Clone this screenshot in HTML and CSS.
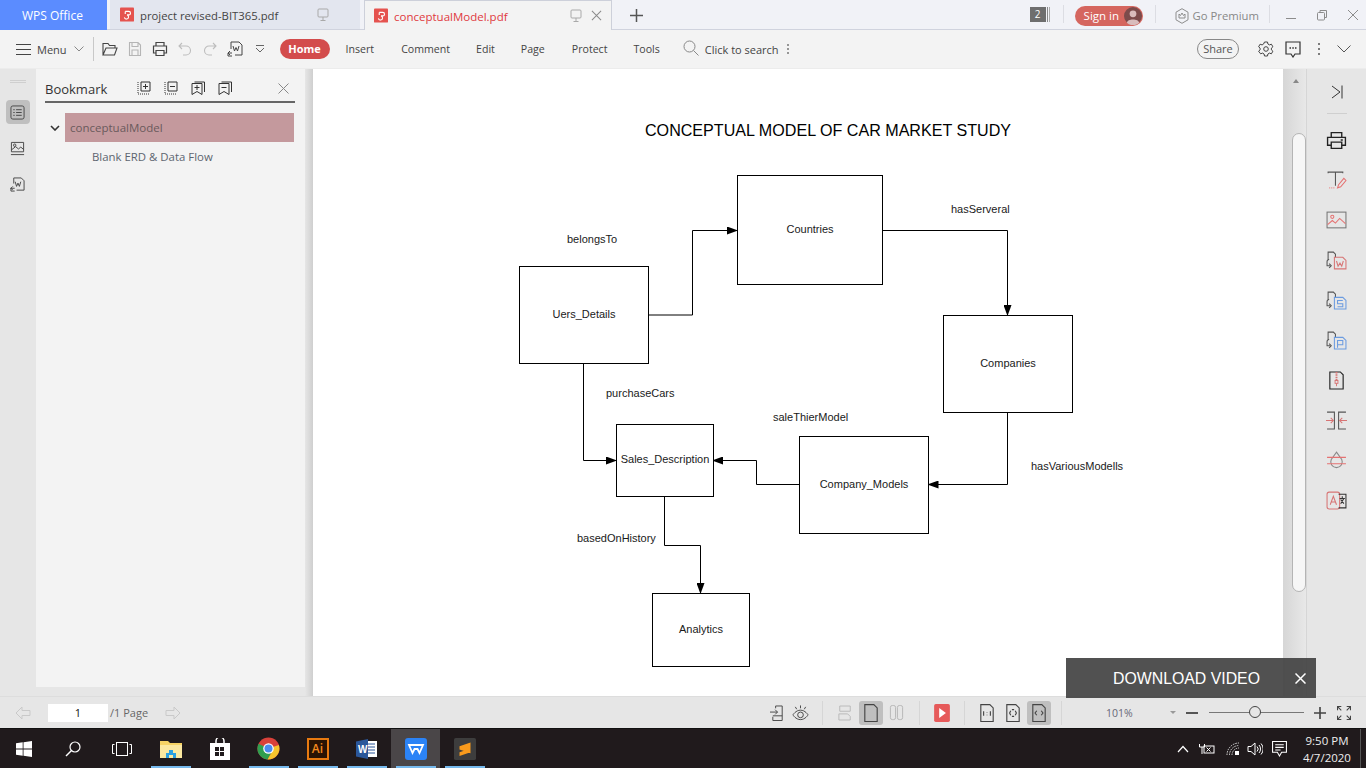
FILE: index.html
```html
<!DOCTYPE html>
<html lang="en">
<head>
<meta charset="utf-8">
<title>conceptualModel.pdf - WPS Office</title>
<link rel="stylesheet" href="styles.css">
</head>
<body>
<div class="app">
  <header class="tabbar">
    <div class="tab-home">WPS Office</div>
    <div class="tab tab-inactive">
      <svg class="pdf-badge" viewBox="0 0 16 16"><rect width="16" height="16" rx="1" fill="#e5534f"/><path d="M6 4.5h4a2 2 0 0 1 0 4H8M6 4.5v3M8 8.5a2.4 2.4 0 1 1-3 2.8" fill="none" stroke="#fff" stroke-width="1.3"/></svg>
      <span class="tab-title">project revised-BIT365.pdf</span>
      <svg class="tab-mon" viewBox="0 0 12 14"><rect x="1" y="1" width="10" height="8" rx="1" fill="none" stroke="#a9a9a9"/><path d="M6 9v3M3.5 12.5h5" stroke="#a9a9a9"/></svg>
    </div>
    <div class="tab tab-active">
      <svg class="pdf-badge" viewBox="0 0 16 16"><rect width="16" height="16" rx="1" fill="#e5534f"/><path d="M6 4.5h4a2 2 0 0 1 0 4H8M6 4.5v3M8 8.5a2.4 2.4 0 1 1-3 2.8" fill="none" stroke="#fff" stroke-width="1.3"/></svg>
      <span class="tab-title active-title">conceptualModel.pdf</span>
      <svg class="tab-mon" viewBox="0 0 12 14"><rect x="1" y="1" width="10" height="8" rx="1" fill="none" stroke="#a9a9a9"/><path d="M6 9v3M3.5 12.5h5" stroke="#a9a9a9"/></svg>
      <svg class="tab-x" viewBox="0 0 12 12"><path d="M1 1l10 10M11 1L1 11" stroke="#8a8a8a" stroke-width="1.1"/></svg>
    </div>
    <svg class="tab-plus" viewBox="0 0 13 13"><path d="M6.5 0v13M0 6.5h13" stroke="#555" stroke-width="1.5"/></svg>
    <div class="tab-spacer"></div>
    <div class="count"><span class="count-num">2</span><i class="count-bars"></i></div>
    <i class="tab-sep sep-a"></i>
    <div class="signin"><span class="signin-text">Sign in</span><svg class="avatar" viewBox="0 0 16 16"><circle cx="8" cy="8" r="8" fill="#7c4b4b"/><circle cx="8" cy="6" r="3" fill="#d9bcbc"/><path d="M2.5 14c.5-4 10.5-4 11 0a8 8 0 0 1-11 0z" fill="#d9bcbc"/></svg></div>
    <i class="tab-sep sep-b"></i>
    <svg class="crown" viewBox="0 0 14 16"><path d="M7 .7l6 3.5v7.600l-6 3.500-6-3.500V4.200z" fill="none" stroke="#8c8c8c"/><path d="M4 6l1.500 1.500L7 5l1.500 2.500L10 6v4H4z" fill="none" stroke="#8c8c8c"/></svg>
    <span class="premium">Go Premium</span>
    <i class="tab-sep sep-c"></i>
    <div class="win-btns">
      <svg viewBox="0 0 12 12"><path d="M1 9.5h10" stroke="#8c8c8c"/></svg>
      <svg viewBox="0 0 12 12"><rect x="1.5" y="3.5" width="7" height="7.500" rx="1" fill="none" stroke="#8c8c8c"/><path d="M4 3V1.500h6.500V8.500H8.500" fill="none" stroke="#8c8c8c"/></svg>
      <svg viewBox="0 0 12 12"><path d="M1 1l10 10M11 1L1 11" stroke="#8c8c8c"/></svg>
    </div>
  </header>

  <nav class="toolbar">
    <svg class="tb-burger" viewBox="0 0 15 11"><path d="M0 .5h15M0 5.500h15M0 10.500h15" stroke="#444"/></svg>
    <span class="tb-menu">Menu</span>
    <svg class="tb-chev" viewBox="0 0 10 6"><path d="M.5.500L5 5 9.500.500" fill="none" stroke="#888"/></svg>
    <i class="tb-sep"></i>
    <div class="quick">
      <svg viewBox="0 0 16 16"><path d="M1 14V2.500h5l1.500 2H13V7M1 14l3-7h11l-2.500 7z" fill="none" stroke="#444" stroke-width="1.100"/></svg>
      <svg viewBox="0 0 16 16"><path d="M2.500 1.500h8.500l2.500 2.500v10.500h-11zM5 1.500v4h6v-4M5 14.500V9h6v5.500" fill="none" stroke="#b5b5b5" stroke-width="1.100"/></svg>
      <svg viewBox="0 0 16 16"><path d="M4 5V1.500h8V5M4 12H1.500V5h13v7H12M4 9.500h8v5H4z" fill="none" stroke="#444" stroke-width="1.200"/></svg>
      <svg viewBox="0 0 16 16"><path d="M5 2L2 5l3 3M2.500 5H9a4 4 0 0 1 0 9H6" fill="none" stroke="#bdbdbd" stroke-width="1.100"/></svg>
      <svg viewBox="0 0 16 16"><path d="M11 2l3 3-3 3M13.500 5H7a4 4 0 0 0 0 9h3" fill="none" stroke="#bdbdbd" stroke-width="1.100"/></svg>
      <svg viewBox="0 0 16 16"><path d="M4 8V1h8l3 3v10H8M6 5l1.500 5L9 6.500l1.500 3.500L12 5M1 12h4M3 10l-2 2 2 2M1 12v3h4" fill="none" stroke="#444"/></svg>
      <svg class="q-more" viewBox="0 0 10 10"><path d="M1 1.500h8M1 4l4 4 4-4" fill="none" stroke="#666"/></svg>
    </div>
    <div class="menu-home">Home</div>
    <ul class="menu-list">
      <li>Insert</li><li>Comment</li><li>Edit</li><li>Page</li><li>Protect</li><li>Tools</li>
    </ul>
    <svg class="tb-search" viewBox="0 0 16 16"><circle cx="6.500" cy="6.500" r="5.500" fill="none" stroke="#888"/><path d="M10.500 10.500l5 5" stroke="#888"/></svg>
    <span class="tb-search-text">Click to search</span>
    <span class="vdots"><i></i><i></i><i></i></span>
    <div class="tb-spacer"></div>
    <div class="share">Share</div>
    <svg class="tb-r tb-gear" viewBox="0 0 16 16"><path d="M6.500 1h3l.4 2 1.500.9 2-.7 1.500 2.600-1.500 1.300v1.800l1.500 1.300-1.500 2.600-2-.7-1.500.9-.4 2h-3l-.4-2-1.500-.9-2 .7L.6 10.200l1.500-1.300V7.100L.6 5.800l1.500-2.600 2 .7 1.500-.9z" fill="none" stroke="#444"/><circle cx="8" cy="8" r="2.300" fill="none" stroke="#444"/></svg>
    <svg class="tb-r tb-chat" viewBox="0 0 16 17"><path d="M1 1h14v12h-5l-2 3-2-3H1z" fill="none" stroke="#333" stroke-width="1.200"/><path d="M4.500 7h1.500M7.300 7h1.500M10 7h1.500" stroke="#333" stroke-width="1.300"/></svg>
    <span class="vdots vdots-dark"><i></i><i></i><i></i></span>
    <svg class="tb-collapse" viewBox="0 0 14 8"><path d="M.5.500L7 7 13.500.500" fill="none" stroke="#555"/></svg>
  </nav>

  <main class="workspace">
    <aside class="rail">
      <i class="rail-grip"></i>
      <div class="rail-btn rail-on"><svg viewBox="0 0 16 16"><rect x="1" y="1" width="14" height="14" rx="2" fill="none" stroke="#444"/><path d="M3.500 5h1.500M6.500 5h6M3.500 8h1.500M6.500 8h6M3.500 11h1.500M6.500 11h6" stroke="#444"/></svg></div>
      <div class="rail-btn"><svg viewBox="0 0 16 16"><path d="M1.500 1.500h13v10h-13z" fill="none" stroke="#444"/><circle cx="5" cy="4.500" r="1.300" fill="none" stroke="#444"/><path d="M1.500 9.500L6 6l3 2.500 2.500-2 3 2.500M1 14.500h14" fill="none" stroke="#444"/></svg></div>
      <div class="rail-btn"><svg viewBox="0 0 16 16"><path d="M4 7V1h8l3 3v10H7M5.500 5l1.500 5 1.500-3.500L10 10l1.500-5M.5 12H5M3 10l-2 2 2 2M1 12v3h4" fill="none" stroke="#444"/></svg></div>
    </aside>
    <section class="bookmarks">
      <div class="bm-head">
        <span class="bm-title">Bookmark</span>
        <div class="bm-tools">
          <svg viewBox="0 0 14 14"><path d="M4 1h9v9H4z" fill="none" stroke="#333"/><path d="M8.500 3v5M6 5.500h5" stroke="#333"/><path d="M1 1v12h12" fill="none" stroke="#333" stroke-dasharray="1 1"/></svg>
          <svg viewBox="0 0 14 14"><path d="M4 1h9v9H4z" fill="none" stroke="#333"/><path d="M6 5.500h5" stroke="#333"/><path d="M1 1v12h12" fill="none" stroke="#333" stroke-dasharray="1 1"/></svg>
          <svg viewBox="0 0 14 14"><path d="M1 2.500h10v11L6 10.500l-5 3z" fill="none" stroke="#333"/><path d="M3.500 1h10v10" fill="none" stroke="#333"/><path d="M6 4v5M3.500 6.500h5" stroke="#333"/></svg>
          <svg viewBox="0 0 14 14"><path d="M1 2.500h10v11L6 10.500l-5 3z" fill="none" stroke="#333"/><path d="M3.500 1h10v10" fill="none" stroke="#333"/><path d="M3.500 6.500h5" stroke="#333"/></svg>
        </div>
        <svg class="bm-close" viewBox="0 0 11 11"><path d="M.5.500l10 10M10.500.500l-10 10" stroke="#888"/></svg>
      </div>
      <div class="bm-row">
        <svg class="bm-caret" viewBox="0 0 10 6"><path d="M1 1l4 4 4-4" fill="none" stroke="#333" stroke-width="1.600"/></svg>
        <div class="bm-selected">conceptualModel</div>
      </div>
      <div class="bm-child">Blank ERD &amp; Data Flow</div>
    </section>
    <i class="gutter"></i>

    <section class="viewer">
      <div class="page">
        <h1 class="doc-title">CONCEPTUAL MODEL OF CAR MARKET STUDY</h1>
        <svg class="wires" viewBox="0 0 970 628" aria-hidden="true">
          <defs><marker id="ah" markerWidth="11" markerHeight="8" refX="10" refY="4" orient="auto" markerUnits="userSpaceOnUse"><path d="M0 0L11 4 0 8z" fill="#000"/></marker></defs>
          <g fill="none" stroke="#000" stroke-width="1">
            <path d="M335.5 247H379.5V162.5H424" marker-end="url(#ah)"/>
            <path d="M569.5 162.5H694.5V247" marker-end="url(#ah)"/>
            <path d="M694.5 345V416.5H615.5" marker-end="url(#ah)"/>
            <path d="M486 416.5H443.5V392.5H400" marker-end="url(#ah)"/>
            <path d="M270.5 296V392.5H303" marker-end="url(#ah)"/>
            <path d="M351.5 429V477.5H387.5V525" marker-end="url(#ah)"/>
          </g>
        </svg>
        <div class="node n-users">Uers_Details</div>
        <div class="node n-countries">Countries</div>
        <div class="node n-companies">Companies</div>
        <div class="node n-models">Company_Models</div>
        <div class="node n-sales">Sales_Description</div>
        <div class="node n-analytics">Analytics</div>
        <span class="edge e-belongs">belongsTo</span>
        <span class="edge e-has">hasServeral</span>
        <span class="edge e-purchase">purchaseCars</span>
        <span class="edge e-sale">saleThierModel</span>
        <span class="edge e-various">hasVariousModells</span>
        <span class="edge e-based">basedOnHistory</span>
      </div>
    </section>

    <div class="vscroll"><i class="v-up"></i><i class="v-thumb"></i><i class="v-down"></i></div>

    <aside class="tools">
      <svg class="t-col" viewBox="0 0 12 14"><path d="M1 1l8 6-8 6M11 .5v13" fill="none" stroke="#333"/></svg>
      <i class="tools-sep"></i>
      <svg class="t-i" viewBox="0 0 20 18"><path d="M5 6V1.500h10V6M5 13.500H1.500V6h17v7.500H15M5 10.500h10v6H5zM14 8.500h2" fill="none" stroke="#222" stroke-width="1.300"/></svg>
      <svg class="t-i" viewBox="0 0 20 18"><path d="M2 2V1h14v1M9 1v13" fill="none" stroke="#555"/><path d="M3 16h6" stroke="#e98b8b" stroke-dasharray="1 1"/><path d="M11 16l1-3 5-6 2 2-5 6z" fill="none" stroke="#e57272"/></svg>
      <svg class="t-i" viewBox="0 0 20 18"><rect x="1" y="1" width="18" height="15" fill="none" stroke="#777"/><circle cx="6" cy="5.500" r="1.500" fill="none" stroke="#e57272"/><path d="M1.500 13L6 9l3 2.500L13 7l5.500 5" fill="none" stroke="#e57272"/></svg>
      <svg class="t-i" viewBox="0 0 20 18"><path d="M2 8V1h5l2 2v3M1 10a2 2 0 0 1 2-2M3 12l2 2-2 2M1 10v4h3" fill="none" stroke="#555"/><path d="M8 6h8l3 3v8H8z" fill="none" stroke="#d77474"/><path d="M10 9.500l1.500 5 1.800-3 1.700 3 1.500-5" fill="none" stroke="#d77474"/></svg>
      <svg class="t-i" viewBox="0 0 20 18"><path d="M2 8V1h5l2 2v3M1 10a2 2 0 0 1 2-2M3 12l2 2-2 2M1 10v4h3" fill="none" stroke="#555"/><path d="M8 6h8l3 3v8H8z" fill="none" stroke="#6b9be0"/><path d="M16 9h-5v3h5v3h-5" fill="none" stroke="#6b9be0"/></svg>
      <svg class="t-i" viewBox="0 0 20 18"><path d="M2 8V1h5l2 2v3M1 10a2 2 0 0 1 2-2M3 12l2 2-2 2M1 10v4h3" fill="none" stroke="#555"/><path d="M8 6h8l3 3v8H8z" fill="none" stroke="#6b9be0"/><path d="M11 16V9h5v4h-5" fill="none" stroke="#6b9be0"/></svg>
      <svg class="t-i" viewBox="0 0 20 20"><path d="M3 1h11l3 3v15H3z" fill="none" stroke="#222" stroke-width="1.200"/><path d="M10 1v9" stroke="#d77474" stroke-width="2" stroke-dasharray="1.500 1"/><rect x="8.500" y="10" width="3" height="3" fill="none" stroke="#d77474"/><path d="M10 13v3" stroke="#d77474"/></svg>
      <svg class="t-i" viewBox="0 0 20 18"><path d="M1 1h7v16H1M19 1h-7v16h7" fill="none" stroke="#555"/><path d="M0 9h7M4.500 6.500L7 9l-2.500 2.500M20 9h-7M15.500 6.500L13 9l2.500 2.500" fill="none" stroke="#d77474"/></svg>
      <svg class="t-i" viewBox="0 0 20 18"><path d="M10 1l5 7a5.500 5.500 0 1 1-10 0z" fill="none" stroke="#888"/><path d="M1 6h18M1 12h18" stroke="#e57272"/></svg>
      <svg class="t-i" viewBox="0 0 20 18"><rect x="1" y="1" width="12" height="16" rx="2" fill="none" stroke="#d77474"/><path d="M4 13L7 5l3 8M5 10.500h4" fill="none" stroke="#d77474"/><path d="M12 3h7v13h-7" fill="none" stroke="#333"/><path d="M13 7h5M15.500 5v2M14 12l3-5M14 8l3 4" fill="none" stroke="#333"/></svg>
    </aside>
    <div class="promo"><span class="promo-text">DOWNLOAD VIDEO</span><svg class="promo-x" viewBox="0 0 11 11"><path d="M.5.500l10 10M10.500.500l-10 10" stroke="#fff" stroke-width="1.500"/></svg></div>
  </main>

  <footer class="status">
    <svg class="st-arrow" viewBox="0 0 16 14"><path d="M1 7l6-6v3.500h8v5H7V13z" fill="none" stroke="#c9c9c9"/></svg>
    <div class="page-input">1</div>
    <span class="page-total">/1 Page</span>
    <svg class="st-arrow" viewBox="0 0 16 14"><path d="M15 7L9 1v3.500H1v5h8V13z" fill="none" stroke="#c9c9c9"/></svg>
    <div class="st-spacer"></div>
    <svg class="st-phone" viewBox="0 0 16 18"><path d="M6 4V1.500h7V17H3v-4M0 8h8M5.500 5.500L8 8l-2.500 2.500M3 12h10" fill="none" stroke="#444"/></svg>
    <svg class="st-eye" viewBox="0 0 18 18"><path d="M1 11s3-5 8-5 8 5 8 5-3 5-8 5-8-5-8-5z" fill="none" stroke="#444"/><circle cx="9" cy="11" r="3" fill="none" stroke="#444"/><path d="M9 1v3M3.500 2.500L5 5M14.500 2.500L13 5" stroke="#444"/></svg>
    <i class="st-sep sep-view"></i>
    <svg class="st-two" viewBox="0 0 16 18"><path d="M2 1h12v6H2zM1 10h10l3 3v4H1z" fill="none" stroke="#b5b5b5"/></svg>
    <div class="st-on st-single"><svg viewBox="0 0 12 16"><path d="M.5.500h8l3 3v12H.5z" fill="none" stroke="#444"/></svg></div>
    <svg class="st-book" viewBox="0 0 16 18"><rect x="1.500" y="1" width="5.500" height="15" rx="2" fill="none" stroke="#b5b5b5"/><rect x="9" y="1" width="5.500" height="15" rx="2" fill="none" stroke="#b5b5b5"/></svg>
    <i class="st-sep sep-layout"></i>
    <svg class="st-play" viewBox="0 0 14 16"><rect width="14" height="16" rx="1.500" fill="#e65a5a"/><path d="M4.500 3.500l6 4.500-6 4.500z" fill="#fff"/></svg>
    <i class="st-sep sep-play"></i>
    <div class="fit-btn fit-first"><svg viewBox="0 0 12 16"><path d="M.5.500h8l3 3v12H.5zM3 6.500v4M6 7v.5M6 9.500v.5M9 6.500v4" fill="none" stroke="#444"/></svg></div>
    <div class="fit-btn"><svg viewBox="0 0 12 16"><path d="M.5.500h8l3 3v12H.5zM4 6l-1 2 1 2M8 6l1 2-1 2M5 5h2M5 11h2" fill="none" stroke="#444"/></svg></div>
    <div class="fit-btn st-on"><svg viewBox="0 0 12 16"><path d="M.5.500h8l3 3v12H.5zM4 6L2.500 8 4 10M8 6l1.500 2L8 10" fill="none" stroke="#444"/></svg></div>
    <i class="st-sep sep-fit"></i>
    <span class="zoom-val">101%</span>
    <i class="zoom-caret"></i>
    <i class="zoom-minus"></i>
    <div class="slider"><i class="slider-knob"></i></div>
    <svg class="zoom-plus" viewBox="0 0 11 11"><path d="M5.500 0v11M0 5.500h11" stroke="#444" stroke-width="1.500"/></svg>
    <svg class="zoom-full" viewBox="0 0 13 13"><path d="M.5 4V.5H4M9 .5h3.500V4M12.500 9v3.500H9M4 12.500H.5V9M.5.500L4 4M12.500.500L9 4M12.500 12.500L9 9M.5 12.500L4 9" fill="none" stroke="#444"/></svg>
  </footer>

  <footer class="taskbar">
    <div class="tb-cell tb-start"><svg viewBox="0 0 16 16"><path d="M0 2.300l6.700-1v6.200H0zM7.500 1.200L16 0v7.500H7.500zM0 8.500h6.700v6.200l-6.700-1zM7.500 8.500H16V16l-8.500-1.200z" fill="#fff"/></svg></div>
    <div class="tb-cell"><svg viewBox="0 0 16 16"><circle cx="10" cy="6" r="5" fill="none" stroke="#fff" stroke-width="1.200"/><path d="M6.500 9.500L1 15" stroke="#fff" stroke-width="1.500"/></svg></div>
    <div class="tb-cell"><svg class="ic-wide" viewBox="0 0 20 14"><rect x="4.500" y=".5" width="11" height="13" fill="none" stroke="#fff"/><path d="M2.500 2.500H.5v9h2M17.500 2.500h2v9h-2" fill="none" stroke="#fff"/></svg></div>
    <div class="tb-cell tb-run"><svg class="ic-app" viewBox="0 0 22 18"><path d="M0 1h8l2 2h12v15H0z" fill="#f6d365"/><path d="M0 5h22v13H0z" fill="#fbe8a0"/><path d="M6 18v-5h3v-3h4v3h3v5h-3v-3H9v3z" fill="#2a9fe0"/></svg></div>
    <div class="tb-cell"><svg class="ic-app" viewBox="0 0 20 22"><path d="M6 6V3a4 4 0 0 1 8 0v3" fill="none" stroke="#fff" stroke-width="1.500"/><path d="M0 5h20v17H0z" fill="#fff"/><path d="M5 9h4v4H5zM10 9h4v4h-4zM5 14h4v4H5zM10 14h4v4h-4z" fill="#201a1c"/></svg></div>
    <div class="tb-cell tb-run"><svg class="ic-app ic-chrome" viewBox="0 0 24 24"><circle cx="12" cy="12" r="11.500" fill="#d9413a"/><path d="M12 12L1.600 7A11.500 11.500 0 0 0 11 23.500L17 13z" fill="#2f9e4f"/><path d="M12 12l10.800-3.600A11.500 11.500 0 0 1 11 23.500L17 13z" fill="#f6c42d"/><circle cx="12" cy="12" r="5.500" fill="#fff"/><circle cx="12" cy="12" r="4.200" fill="#4a8bf0"/></svg></div>
    <div class="tb-cell tb-run"><div class="ai-logo">Ai</div></div>
    <div class="tb-cell tb-run"><svg class="ic-app" viewBox="0 0 22 20"><path d="M9 2h12v16H9z" fill="#fff"/><path d="M11 5h8M11 8h8M11 11h8M11 14h8" stroke="#2b579a"/><path d="M0 2.500L12 0v20L0 17.500z" fill="#2b579a"/><text class="word-w" x="2" y="14">W</text></svg></div>
    <div class="tb-cell tb-run tb-active"><svg class="ic-wps" viewBox="0 0 22 22"><rect width="22" height="22" rx="3" fill="#2b83f6"/><path d="M4 7h14l-3.500 8-2-4H9.500l-2 4z" fill="none" stroke="#fff" stroke-width="1.800"/></svg></div>
    <div class="tb-cell tb-run"><svg class="ic-wps" viewBox="0 0 24 24"><rect width="24" height="24" rx="2" fill="#3d3d3d"/><path d="M18 5L6 9v3.500l12 4M18 7.500v4L6 15.500v4l12-4" fill="#f89a1c"/></svg></div>
    <div class="task-spacer"></div>
    <svg class="tray" viewBox="0 0 12 8"><path d="M1 7l5-5.500L11 7" fill="none" stroke="#fff" stroke-width="1.200"/></svg>
    <svg class="tray tray-bat" viewBox="0 0 16 12"><path d="M.5 1v3h5V1M3 4v3M3 7v4" fill="none" stroke="#fff"/><rect x="5" y="3" width="10" height="7" fill="none" stroke="#fff"/><path d="M7.500 4.500l4 4M11.500 4.500l-4 4" stroke="#fff"/></svg>
    <svg class="tray tray-wifi" viewBox="0 0 14 14"><path d="M1 13a12 12 0 0 1 12-12M3.500 13A9.500 9.500 0 0 1 13 3.500M6 13a7 7 0 0 1 7-7" fill="none" stroke="#ddd" stroke-dasharray="1.500 1"/><rect x="9" y="9" width="4" height="4" fill="#fff"/></svg>
    <svg class="tray tray-vol" viewBox="0 0 16 14"><path d="M1 4.500h3L8 1v12L4 9.500H1z" fill="none" stroke="#fff"/><path d="M10 4.500a3.500 3.500 0 0 1 0 5M12 3a6 6 0 0 1 0 8M14 1.500a8 8 0 0 1 0 11" fill="none" stroke="#fff"/></svg>
    <svg class="tray tray-note" viewBox="0 0 14 15"><path d="M.5.500h13v10H9L7 14l-2-3.500H.5zM3 3.500h8M3 6h8M3 8.500h5" fill="none" stroke="#fff"/></svg>
    <div class="clock"><span>9:50 PM</span><span>4/7/2020</span></div>
    <i class="show-desktop"></i>
  </footer>
</div>
</body>
</html>
```

FILE: styles.css
```css
* { box-sizing: border-box; }
html, body { margin: 0; height: 100%; overflow: hidden; }
body { font-family: "Open Sans", "Noto Sans", sans-serif; font-size: 11px; color: #333; }
i { display: block; font-style: normal; }
svg { display: block; flex: none; }
.app { width: 1366px; height: 768px; display: flex; flex-direction: column; position: relative; background: #f3f3f3; }

/* tab strip */
.tabbar { height: 30px; flex: none; display: flex; align-items: stretch; background: #f1f2f7; border-bottom: 1px solid #d0d3de; }
.tab-home { width: 107px; height: 30px; background: #5b8cff; color: #fff; font-size: 12px; padding-left: 22px; display: flex; align-items: center; }
.tab { display: flex; align-items: center; height: 30px; }
.tab-inactive { width: 250px; margin-left: 3px; padding-left: 10px; background: #e3e6ef; border-bottom: 1px solid #d0d3de; }
.tab-active { width: 248px; margin-left: 4px; padding-left: 9px; background: #f3f3f3; border: 1px solid #cdd0da; border-bottom: 0; }
.pdf-badge { width: 14px; height: 15px; }
.tab-title { flex: 1; white-space: nowrap; font-size: 11.3px; color: #444; margin-left: 6px; padding-top: 1px; }
.active-title { color: #e0393e; font-size: 11.500px; }
.tab-mon { width: 12px; height: 14px; }
.tab-inactive .tab-mon { margin-right: 31px; }
.tab-x { width: 11px; height: 11px; margin: 0 9px; }
.tab-plus { width: 13px; height: 13px; margin: 9px 0 0 18px; }
.tab-spacer { flex: 1; }
.count { display: flex; align-items: center; width: 21px; gap: 1px; }
.count-num { width: 16px; height: 15px; background: #6e6e6e; color: #fff; font-size: 10px; line-height: 15px; text-align: center; }
.count-bars { width: 3px; height: 15px; border-left: 1px solid #888; border-right: 1px solid #aaa; }
.tab-sep { width: 1px; height: 18px; margin-top: 5px; background: #dcdde3; }
.sep-a { margin-left: 12px; margin-right: 11px; }
.signin { width: 68px; height: 20px; margin-top: 6px; border-radius: 10px; background: #d5665f; color: #fff; font-size: 11.500px; display: flex; align-items: center; justify-content: space-between; padding: 0 1px 0 9px; }
.signin-text { margin-top: -2px; }
.avatar { width: 18px; height: 18px; }
.sep-b { margin-left: 12px; margin-right: 19px; }
.crown { width: 14px; height: 16px; margin-top: 8px; margin-right: 4px; }
.premium { font-size: 11.300px; color: #888; line-height: 31px; white-space: nowrap; }
.sep-c { margin-left: 10px; margin-right: 15px; }
.win-btns { display: flex; gap: 19px; padding: 9px 7px 0 0; }
.win-btns svg { width: 12px; height: 12px; }

/* ribbon */
.toolbar { height: 39px; flex: none; display: flex; align-items: center; background: #f3f3f3; padding-left: 16px; border-bottom: 1px solid #ececec; }
.tb-burger { width: 15px; height: 11px; }
.tb-menu { margin-left: 6px; font-size: 11px; color: #444; }
.tb-chev { width: 10px; height: 6px; margin-left: 7px; }
.tb-sep { width: 1px; height: 24px; background: #c8c8c8; margin-left: 9px; }
.quick { display: flex; gap: 9px; margin-left: 8px; align-items: center; }
.quick svg { width: 16px; height: 16px; }
.quick .q-more { width: 10px; height: 10px; margin-left: 3px; }
.menu-home { width: 50px; height: 20px; margin-left: 15px; border-radius: 10px; background: #d34c4c; color: #fff; font-size: 11px; font-weight: 700; text-align: center; line-height: 20px; }
.menu-list { list-style: none; display: flex; margin: 0; padding: 0; }
.menu-list li { font-size: 10.600px; color: #444; }
.menu-list li:nth-child(1) { margin-left: 16px; }
.menu-list li:nth-child(2) { margin-left: 27px; }
.menu-list li:nth-child(3) { margin-left: 26px; }
.menu-list li:nth-child(4) { margin-left: 26px; }
.menu-list li:nth-child(5) { margin-left: 27px; }
.menu-list li:nth-child(6) { margin-left: 26px; }
.tb-search { width: 16px; height: 16px; margin-left: 23px; margin-top: -2px; }
.tb-search-text { margin-left: 6px; font-size: 11px; color: #444; }
.vdots { display: flex; flex-direction: column; gap: 2px; margin-left: 8px; }
.vdots i { width: 2px; height: 2px; background: #777; border-radius: 1px; }
.tb-spacer { flex: 1; }
.share { width: 42px; height: 20px; border: 1px solid #888; border-radius: 10px; text-align: center; font-size: 11px; line-height: 18px; color: #555; }
.tb-r { width: 16px; height: 16px; }
.tb-gear { margin-left: 19px; }
.tb-chat { height: 17px; margin-left: 11px; }
.vdots-dark { margin-left: 17px; gap: 3px; }
.vdots-dark i { background: #555; }
.tb-collapse { width: 14px; height: 8px; margin: 0 15px 0 17px; }

/* workspace */
.workspace { flex: 1; min-height: 0; display: flex; position: relative; background: #e6e6e6; }
.rail { width: 36px; flex: none; background: #e6e6e6; display: flex; flex-direction: column; align-items: center; padding-top: 11px; }
.rail-grip { width: 16px; height: 3px; border-top: 1px solid #cfcfcf; border-bottom: 1px solid #cfcfcf; margin-bottom: 17px; margin-left: -1px; }
.rail-btn { width: 24px; height: 24px; margin: 0 0 12px -1px; display: flex; align-items: center; justify-content: center; border-radius: 4px; }
.rail-btn svg { width: 15px; height: 15px; }
.rail-on { background: #bfbfbf; }
.bookmarks { width: 269px; flex: none; margin: 0 0 9px 0; padding: 0 0 0 9px; background: #f3f3f3; }
.bm-head { width: 250px; height: 34px; padding-top: 6px; display: flex; align-items: center; border-bottom: 2px solid #666; }
.bm-title { font-size: 13px; color: #333; width: 92px; padding-top: 2px; }
.bm-tools { display: flex; gap: 13px; }
.bm-tools svg { width: 14px; height: 14px; }
.bm-close { width: 11px; height: 11px; margin-left: 46px; }
.bm-row { display: flex; align-items: center; height: 29px; margin-top: 10px; }
.bm-caret { width: 10px; height: 6px; margin-left: 5px; }
.bm-selected { width: 229px; height: 29px; margin-left: 5px; background: #c4999d; color: #6a5a5c; font-size: 11.500px; line-height: 29px; padding-left: 5px; }
.bm-child { font-size: 11.400px; color: #5d6570; margin: 6px 0 0 47px; line-height: 18px; }
.gutter { width: 8px; flex: none; background: linear-gradient(90deg, #e6e6e6, #cfcfcf); }

.viewer { width: 970px; flex: none; background: #fff; overflow: hidden; position: relative; }
.page { position: relative; width: 970px; height: 628px; margin-top: -1px; }
.doc-title { position: absolute; left: 0; top: 52px; width: 1030px; margin: 0; text-align: center; font: 400 16.100px/20px "Liberation Sans", Arial, sans-serif; color: #000; }
.wires { position: absolute; left: 0; top: 0; width: 970px; height: 628px; }
.node { position: absolute; border: 1px solid #000; background: #fff; padding-bottom: 3px; display: flex; align-items: center; justify-content: center; font: 11px "Liberation Sans", Arial, sans-serif; color: #1a1a1a; white-space: nowrap; }
.n-users { left: 206px; top: 198px; width: 130px; height: 98px; }
.n-countries { left: 424px; top: 107px; width: 146px; height: 110px; }
.n-companies { left: 630px; top: 247px; width: 130px; height: 98px; }
.n-models { left: 486px; top: 368px; width: 130px; height: 98px; }
.n-sales { left: 303px; top: 356px; width: 98px; height: 73px; }
.n-analytics { left: 339px; top: 525px; width: 98px; height: 74px; }
.edge { position: absolute; font: 11px/14px "Liberation Sans", Arial, sans-serif; color: #1a1a1a; white-space: nowrap; }
.e-belongs { left: 254px; top: 164px; }
.e-has { left: 638px; top: 134px; }
.e-purchase { left: 293px; top: 318px; }
.e-sale { left: 460px; top: 342px; }
.e-various { left: 718px; top: 391px; }
.e-based { left: 264px; top: 463px; }

.vscroll { flex: none; width: 23px; position: relative; background: linear-gradient(90deg, #d6d6d6, #e8e8e8); }
.v-up { position: absolute; left: 10px; top: 10px; border: 3px solid transparent; border-bottom: 4px solid #888; border-top: 0; width: 0; height: 0; }
.v-down { position: absolute; left: 13px; top: 615px; border: 3px solid transparent; border-top: 4px solid #888; border-bottom: 0; width: 0; height: 0; }
.v-thumb { position: absolute; left: 9px; top: 64px; width: 14px; height: 459px; border: 1px solid #b4b4b4; border-radius: 7px; background: #f6f6f6; }
.tools { flex: 1; border-left: 1px solid #d6d6d6; background: #e6e6e6; display: flex; flex-direction: column; align-items: center; padding-top: 16px; }
.t-i { width: 21px; height: 19px; margin-bottom: 21px; }
.t-col { width: 12px; height: 14px; margin-bottom: 14px; }
.tools-sep { width: 20px; height: 1px; background: #cfcfcf; margin-bottom: 17px; }
.promo { position: absolute; right: 50px; bottom: -2px; width: 250px; height: 40px; background: rgba(68,68,68,.93); display: flex; align-items: center; color: #fff; }
.promo-text { font: 15.850px "Liberation Sans", Arial, sans-serif; margin: 1px 0 0 47px; width: 182px; white-space: nowrap; }
.promo-x { width: 11px; height: 11px; }

/* status */
.status { height: 32px; flex: none; background: #e6e6e6; border-top: 1px solid #ddd; display: flex; align-items: center; padding-left: 15px; }
.st-arrow { width: 16px; height: 14px; }
.page-input { width: 60px; height: 18px; margin-left: 17px; background: #fff; color: #111; text-align: center; font-size: 11px; line-height: 18px; }
.page-total { margin: 0 17px 0 2px; font-size: 11px; color: #666; width: 38px; white-space: nowrap; }
.st-spacer { width: 589px; }
.st-phone { width: 15px; height: 18px; }
.st-eye { width: 17px; height: 18px; margin-left: 7px; }
.st-two { width: 14px; height: 18px; margin-left: 15px; }
.st-book { width: 15px; height: 18px; margin-left: 6px; }
.st-sep { width: 1px; height: 24px; background: #d6d6d6; }
.sep-view { margin-left: 13px; }
.sep-layout { margin-left: 15px; }
.sep-play { margin-left: 14px; }
.sep-fit { margin-left: 10px; }
.st-on { width: 24px; height: 24px; border-radius: 3px; background: #bfbfbf; display: flex; align-items: center; justify-content: center; }
.st-on svg { width: 14px; height: 18px; }
.st-single { margin-left: 7px; }
.st-play { width: 16px; height: 18px; margin-left: 14px; }
.fit-btn { width: 24px; height: 24px; display: flex; align-items: center; justify-content: center; margin-left: 2px; }
.fit-btn svg { width: 14px; height: 18px; }
.fit-first { margin-left: 10px; }
.zoom-val { font-size: 10.500px; color: #667; margin-left: 44px; width: 27px; white-space: nowrap; }
.zoom-caret { width: 0; height: 0; border: 3px solid transparent; border-top: 3px solid #999; border-bottom: 0; margin-left: 37px; }
.zoom-minus { width: 12px; height: 2px; background: #555; margin-left: 10px; }
.slider { width: 95px; height: 1px; background: #777; margin-left: 11px; position: relative; }
.slider-knob { position: absolute; left: 40px; top: -6px; width: 12px; height: 12px; border-radius: 50%; border: 1px solid #444; background: #e6e6e6; }
.zoom-plus { width: 12px; height: 12px; margin-left: 10px; }
.zoom-full { width: 14px; height: 14px; margin-left: 11px; }

/* taskbar */
.taskbar { height: 40px; flex: none; background: #201a1c; display: flex; align-items: stretch; border-top: 1px solid #111; color: #fff; }
.tb-cell { width: 49px; display: flex; align-items: center; justify-content: center; position: relative; }
.tb-cell svg { width: 16px; height: 16px; }
.tb-start { width: 48px; }
.tb-cell .ic-wide { width: 20px; height: 14px; }
.tb-cell .ic-app { width: 22px; height: 22px; }
.tb-cell .ic-chrome { width: 23px; height: 23px; }
.tb-cell .ic-wps { width: 22px; height: 22px; }
.tb-run::after { content: ""; position: absolute; left: 5px; right: 4px; bottom: 0; height: 2px; background: #76b9ed; }
.tb-active { background: #4a4648; }
.ai-logo { width: 22px; height: 22px; border: 2px solid #e87a10; background: #2a1404; color: #f48a1e; font-size: 12px; font-weight: 600; line-height: 18px; text-align: center; }
.word-w { font: 700 10px "Liberation Sans", Arial, sans-serif; fill: #fff; }
.task-spacer { flex: 1; }
.tray { align-self: center; width: 12px; height: 8px; }
.tray-bat { width: 16px; height: 12px; margin-left: 10px; }
.tray-wifi { width: 14px; height: 14px; margin-left: 11px; }
.tray-vol { width: 16px; height: 14px; margin-left: 7px; }
.tray-note { width: 15px; height: 16px; margin-left: 9px; }
.clock { width: 62px; margin-left: 9px; display: flex; flex-direction: column; align-items: center; justify-content: center; font-size: 11.500px; line-height: 17px; color: #eee; }
.show-desktop { width: 6px; border-left: 1px solid #555; margin-left: 2px; }
```
